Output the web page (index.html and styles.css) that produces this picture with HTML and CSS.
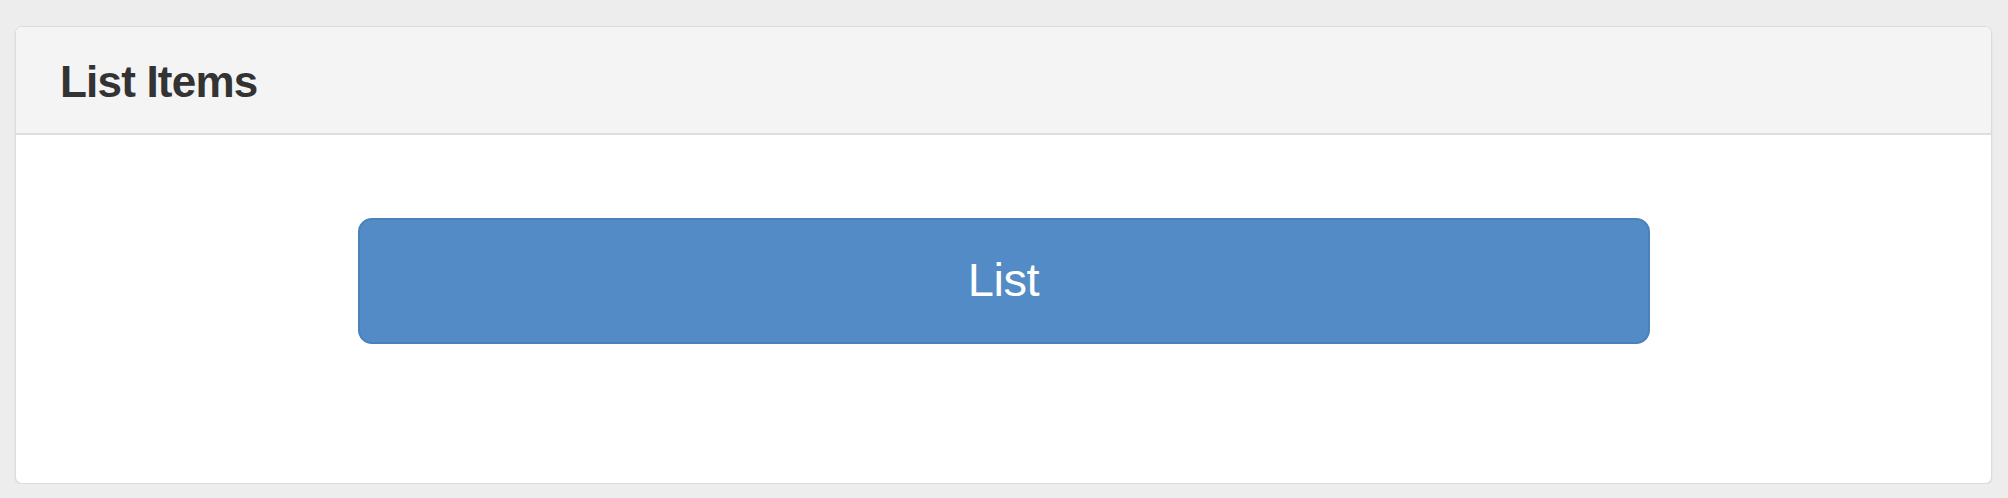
FILE: index.html
```html
<!DOCTYPE html>
<html>
<head>
<meta charset="utf-8">
<link rel="stylesheet" href="styles.css">
</head>
<body>
<div class="page">
  <div class="panel">
    <div class="panel-heading">
      <h3 class="panel-title">List Items</h3>
    </div>
    <div class="panel-body">
      <button class="btn-list" type="button">List</button>
    </div>
  </div>
</div>
</body>
</html>
```
FILE: styles.css
```css
html, body {
  margin: 0;
  padding: 0;
  background: #ededed;
  font-family: "Liberation Sans", Arial, Helvetica, sans-serif;
}

.page {
  padding: 26px 16px 0 15px;
}

.panel {
  background: #fff;
  border: 1px solid #dcdcdc;
  border-radius: 7px;
  box-shadow: 0 1px 2px rgba(0, 0, 0, 0.08);
  overflow: hidden;
}

.panel-heading {
  height: 108px;
  background: #f4f4f4;
  border-bottom: 2px solid #dedede;
  display: flex;
  align-items: center;
  padding: 3px 44px 0;
  box-sizing: border-box;
}

.panel-title {
  margin: 0;
  font-size: 44px;
  font-weight: bold;
  letter-spacing: -0.8px;
  color: #333;
  line-height: 1;
}

.panel-body {
  height: 348px;
  display: flex;
  justify-content: center;
  align-items: flex-start;
  padding-top: 83px;
  box-sizing: border-box;
}

.btn-list {
  width: 1292px;
  height: 126px;
  background: #528bc5;
  border: 2px solid #4b81bb;
  border-radius: 14px;
  color: #fff;
  font-family: "Liberation Sans", Arial, Helvetica, sans-serif;
  font-size: 47px;
  letter-spacing: -0.4px;
  line-height: 1;
  padding: 0 0 3px;
  cursor: pointer;
}
```
